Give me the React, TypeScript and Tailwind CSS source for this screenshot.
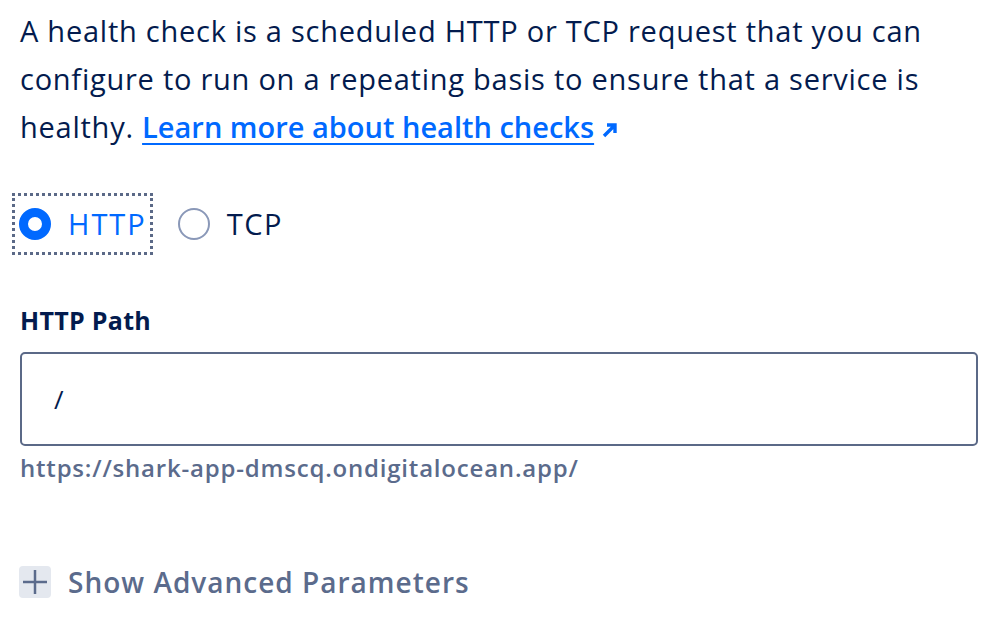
export default function App() {
  return (
    <div
      className="w-[1006px] h-[630px] bg-white overflow-hidden pl-[20px] pr-[28px] pt-[7px] text-[#031b4e]"
      style={{ fontFamily: "'Open Sans', sans-serif" }}
    >
      <p className="text-[29px] leading-[48px] tracking-[0.75px]">
        A health check is a scheduled HTTP or TCP request that you can configure to run on a repeating basis to ensure
        that a service is healthy.{" "}
        <a
          href="#"
          className="text-[#0069ff] font-semibold tracking-normal underline underline-offset-[5px] decoration-2"
        >
          Learn more about health checks
        </a>
        <svg className="inline-block ml-[8px] align-baseline" width="16" height="16" viewBox="0 0 16 16">
          <path d="M2 14 L13 3 M5 3 H13 V11" stroke="#0069ff" strokeWidth="3.4" fill="none" />
        </svg>
      </p>

      <div className="flex items-center mt-[42px] -ml-[8px]">
        <label className="flex items-center gap-[17px] h-[62px] pl-[4px] pr-[3px] border-[3px] border-dotted border-[#5b6987]">
          <span className="w-[32px] h-[32px] rounded-full border-[9px] border-[#0069ff] bg-white" />
          <span className="text-[29px] tracking-[2px] text-[#0069ff]">HTTP</span>
        </label>
        <label className="flex items-center gap-[17px] ml-[25px]">
          <span className="w-[32px] h-[32px] rounded-full border-2 border-[#8a98b8] bg-white" />
          <span className="text-[29px] tracking-[1.5px]">TCP</span>
        </label>
      </div>

      <div className="mt-[48px] text-[25px] font-bold leading-[34px] tracking-[0.3px]">HTTP Path</div>
      <div className="mt-[15px] h-[94px] border-2 border-[#5b6987] rounded-[5px] flex items-center px-[32px]">
        <span className="text-[26px]">/</span>
      </div>
      <div className="mt-[7px] text-[24px] font-semibold text-[#5b6b8c] leading-[30px] tracking-[0.8px]">
        https://shark-app-dmscq.ondigitalocean.app/
      </div>

      <div className="mt-[78px] flex items-center gap-[17px] -ml-[1px]">
        <span className="w-[32px] h-[32px] rounded-[4px] bg-[#e4e8ef] flex items-center justify-center">
          <svg width="24" height="24" viewBox="0 0 24 24">
            <path d="M12 0 V24 M0 12 H24" stroke="#5b6b8c" strokeWidth="2.5" />
          </svg>
        </span>
        <span className="text-[28px] font-semibold text-[#5b6b8c] tracking-[1px]">Show Advanced Parameters</span>
      </div>
    </div>
  );
}
